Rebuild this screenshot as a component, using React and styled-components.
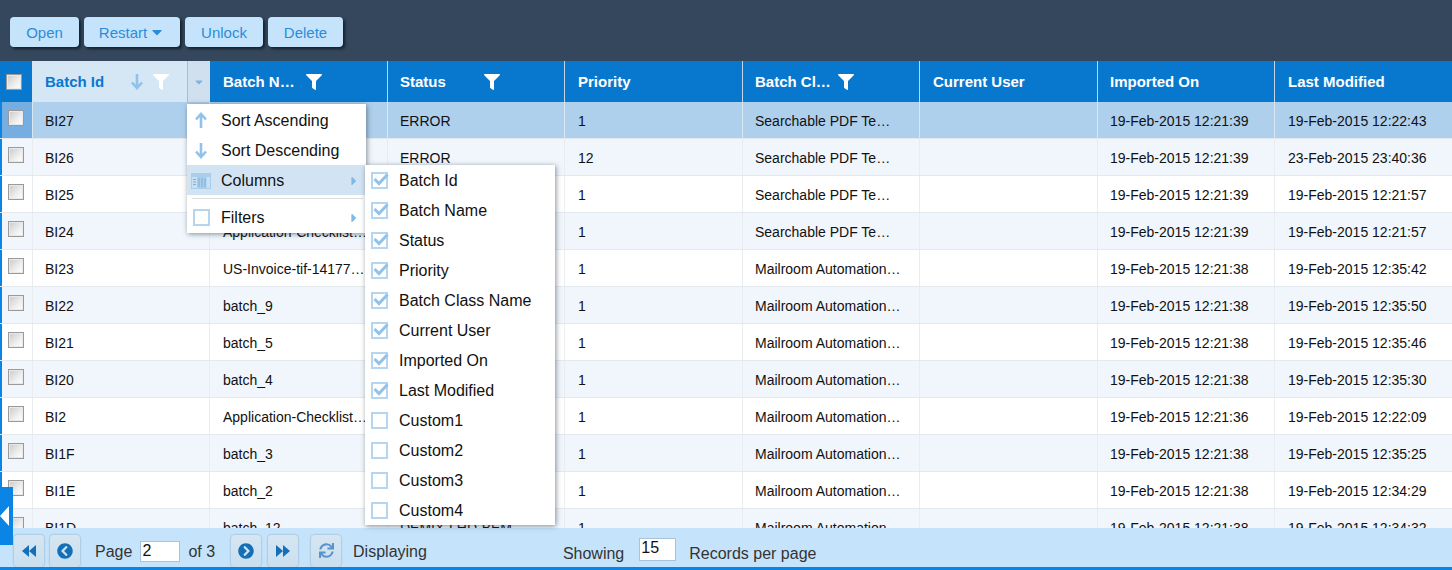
import React from "react";
import styled, { createGlobalStyle } from "styled-components";
import { FaFilter, FaChevronCircleLeft, FaChevronCircleRight, FaSync, FaCaretDown, FaCaretRight } from "react-icons/fa";

const GlobalStyle = createGlobalStyle`
  html, body {
    margin: 0;
    padding: 0;
    overflow: hidden;
  }
  body {
    font-family: "Liberation Sans", Arial, sans-serif;
  }
`;

const COLUMN_TEMPLATE = "32px 177px 178px 177px 178px 177px 178px 177px 178px";

const Page = styled.div`
  position: relative;
  display: flex;
  flex-direction: column;
  width: 1452px;
  height: 570px;
  overflow: hidden;
  background: #fff;
`;

const Toolbar = styled.div`
  display: flex;
  align-items: flex-start;
  gap: 5px;
  flex: 0 0 61px;
  box-sizing: border-box;
  padding: 17px 0 0 10px;
  background: #35475c;
`;

const ToolButton = styled.button`
  display: flex;
  align-items: center;
  justify-content: center;
  gap: 2px;
  width: ${(p) => p.$width}px;
  height: 30px;
  padding: 0;
  border: 0;
  border-radius: 4px;
  background: #c5e4fb;
  color: #2b8cd9;
  font-family: inherit;
  font-size: 15px;
  box-shadow: 2px 2px 3px rgba(10, 20, 30, 0.75);
`;

const HeaderRow = styled.div`
  display: grid;
  grid-template-columns: ${COLUMN_TEMPLATE};
  flex: 0 0 41px;
  background: #0878cf;
`;

const HeaderCell = styled.div`
  display: flex;
  align-items: center;
  box-sizing: border-box;
  padding-left: 13px;
  border-left: 1px solid ${(p) => (p.$active ? "#d5e6f5" : p.$afterActive ? "#d0e0ee" : "#c4d6e6")};
  background: ${(p) => (p.$active ? "#d5e6f5" : "transparent")};
  color: ${(p) => (p.$active ? "#0878cf" : "#fff")};
  font-size: 15px;
  font-weight: bold;
  white-space: nowrap;
  &:nth-child(even) {
    padding-left: 12px;
  }
`;

const HeaderLabel = styled.span`
  flex: none;
  width: ${(p) => p.$width}px;
`;

const HeaderFilter = styled(FaFilter)`
  flex: none;
  margin-left: ${(p) => p.$gap}px;
  width: 16px;
  height: 16px;
  color: #fff;
`;

const HeaderTrigger = styled.div`
  display: flex;
  align-items: center;
  justify-content: center;
  align-self: stretch;
  flex: 0 0 22px;
  margin-left: auto;
  box-sizing: border-box;
  border-left: 1px solid #a9bccb;
  background: #d0e0ee;
  color: #7db5e3;
`;

const SortArrow = styled.span`
  display: flex;
  flex: none;
  color: #8fc3ec;
`;

const CheckCell = styled.div`
  display: flex;
  align-items: ${(p) => (p.$header ? "center" : "flex-start")};
  box-sizing: border-box;
  padding: ${(p) => (p.$header ? "0 0 0 6px" : "8px 0 0 6px")};
  background: ${(p) => (p.$selected ? "#76aee2" : "transparent")};
  border-left: ${(p) => (p.$header ? "0" : "2px solid #0a85e6")};
`;

const GreyCheck = styled.span`
  display: block;
  box-sizing: border-box;
  width: 16px;
  height: 16px;
  border: 1px solid #9a9a9a;
  background: linear-gradient(135deg, #c9c9c9 0%, #efefef 60%, #fff 100%);
  box-shadow: inset 0 0 0 1px #e9e9e9;
`;

const Rows = styled.div`
  flex: 1 1 0;
  min-height: 0;
  overflow: hidden;
`;

const Row = styled.div`
  display: grid;
  grid-template-columns: ${COLUMN_TEMPLATE};
  height: 37px;
  box-sizing: border-box;
  border-bottom: 1px solid #e4e9ed;
  background: ${(p) => (p.$selected ? "#aed0ed" : p.$odd ? "#f0f6fc" : "#fff")};
`;

const Cell = styled.div`
  box-sizing: border-box;
  padding: 2px 0 0 13px;
  border-left: 1px solid ${(p) => (p.$selected ? "#d9e7f3" : "#e9edf0")};
  color: #111;
  font-size: 14px;
  line-height: 35px;
  white-space: nowrap;
  overflow: hidden;
  &:nth-child(even) {
    padding-left: 12px;
  }
`;

const Footer = styled.div`
  display: flex;
  align-items: center;
  flex: 0 0 42px;
  box-sizing: border-box;
  padding: 6px 0 0 14px;
  border-bottom: 3px solid #0a85e6;
  background: #c5e4fb;
  color: #222;
  font-size: 16px;
`;

const PagerButton = styled.button`
  display: flex;
  align-items: center;
  justify-content: center;
  flex: none;
  width: 30px;
  height: 32px;
  margin-left: ${(p) => p.$gap || 0}px;
  padding: 0;
  border: 0;
  border-radius: 4px;
  background: linear-gradient(#d6e6f2, #c9dfef);
  box-shadow: 0 0 2px rgba(70, 90, 110, 0.6);
  color: ${(p) => p.$color || "#136fb8"};
`;

const FooterText = styled.span`
  flex: none;
  margin: ${(p) => p.$drop}px 0 0 ${(p) => p.$gap}px;
  color: #333;
`;

const PagerInput = styled.div`
  flex: none;
  box-sizing: border-box;
  width: ${(p) => p.$width}px;
  height: ${(p) => p.$height}px;
  margin: ${(p) => p.$lift}px 0 0 ${(p) => p.$gap}px;
  padding-left: 1px;
  border: 1px solid #a9c4d8;
  background: #fff;
  color: #111;
  font-size: 16px;
  line-height: 17px;
`;

const SideTab = styled.div`
  position: absolute;
  left: 0;
  top: 487px;
  display: flex;
  align-items: center;
  width: 13px;
  height: 58px;
  background: #0a85e6;
`;

const Menu = styled.div`
  position: absolute;
  left: ${(p) => p.$left}px;
  top: ${(p) => p.$top}px;
  box-sizing: border-box;
  width: ${(p) => p.$width}px;
  padding: ${(p) => p.$pad || 0}px 0 ${(p) => p.$pad || 0}px;
  background: #fff;
  box-shadow: 1px 1px 5px rgba(40, 50, 60, 0.55);
  z-index: ${(p) => p.$layer};
`;

const MenuItem = styled.div`
  display: flex;
  align-items: center;
  box-sizing: border-box;
  height: 30px;
  padding-top: 1px;
  background: ${(p) => (p.$active ? "#d2e4f4" : "transparent")};
  color: #111;
  font-size: 16px;
`;

const MenuIcon = styled.span`
  display: flex;
  align-items: center;
  justify-content: center;
  flex: none;
  box-sizing: border-box;
  width: 34px;
  padding-right: ${(p) => p.$inset || 0}px;
  color: #8fc3ec;
`;

const MenuArrow = styled(FaCaretRight)`
  margin-left: auto;
  margin-right: 7px;
  width: 10px;
  height: 14px;
  color: #7fb9e8;
`;

const MenuSeparator = styled.div`
  height: 1px;
  margin: 3px 3px 3px 5px;
  background: #dcdcdc;
`;

const BoxIcon = styled.span`
  position: relative;
  display: block;
  box-sizing: border-box;
  width: 17px;
  height: 17px;
  border: 2px solid #b5d5f0;
  background: #fff;
`;

const TickSvg = styled.svg`
  position: absolute;
  left: -2px;
  top: -2px;
`;

const ArrowSvg = styled.svg`
  transform: ${(p) => (p.$up ? "rotate(180deg)" : "none")};
`;

const TriangleSvg = styled.svg`
  transform: ${(p) => (p.$right ? "scaleX(-1)" : "none")};
`;

function Arrow({ up }) {
  return (
    <ArrowSvg $up={up} width="14" height="17" viewBox="0 0 14 17">
      <path d="M7 1v13M2 9.5l5 5.5 5-5.5" fill="none" stroke="currentColor" strokeWidth="2.6" />
    </ArrowSvg>
  );
}

function ColumnsIcon() {
  return (
    <svg width="20" height="16" viewBox="0 0 20 16">
      <rect width="20" height="16" fill="#a9cdea" />
      <rect x="1" y="4" width="5" height="11" fill="#c9e0f3" />
      <path d="M2 6.5h3M2 9h3M2 11.5h3M8 5v9M11 5v9M14 5v9" stroke="#7fb0d8" strokeWidth="1" />
      <rect x="15.5" y="4" width="3.5" height="11" fill="#c9e0f3" />
    </svg>
  );
}

function DoubleTriangle({ right }) {
  return (
    <TriangleSvg $right={right} width="16" height="14" viewBox="0 0 16 14">
      <path d="M8 1v12L1 7zM15 1v12L8 7z" fill="currentColor" />
    </TriangleSvg>
  );
}

function Tick() {
  return (
    <TickSvg width="18" height="17" viewBox="0 0 18 17">
      <path d="M3.5 7l4.5 4.5L16.500 2.500" fill="none" stroke="#8fc3ec" strokeWidth="3" />
    </TickSvg>
  );
}

const APP = "Application-Checklist…";
const SEARCH = "Searchable PDF Te…";
const MAIL = "Mailroom Automation…";

const batches = [
  ["BI27", APP, "ERROR", "1", SEARCH, "19-Feb-2015 12:21:39", "19-Feb-2015 12:22:43"],
  ["BI26", APP, "ERROR", "12", SEARCH, "19-Feb-2015 12:21:39", "23-Feb-2015 23:40:36"],
  ["BI25", APP, "ERROR", "1", SEARCH, "19-Feb-2015 12:21:39", "19-Feb-2015 12:21:57"],
  ["BI24", APP, "ERROR", "1", SEARCH, "19-Feb-2015 12:21:39", "19-Feb-2015 12:21:57"],
  ["BI23", "US-Invoice-tif-14177…", "ERROR", "1", MAIL, "19-Feb-2015 12:21:38", "19-Feb-2015 12:35:42"],
  ["BI22", "batch_9", "ERROR", "1", MAIL, "19-Feb-2015 12:21:38", "19-Feb-2015 12:35:50"],
  ["BI21", "batch_5", "ERROR", "1", MAIL, "19-Feb-2015 12:21:38", "19-Feb-2015 12:35:46"],
  ["BI20", "batch_4", "ERROR", "1", MAIL, "19-Feb-2015 12:21:38", "19-Feb-2015 12:35:30"],
  ["BI2", APP, "ERROR", "1", MAIL, "19-Feb-2015 12:21:36", "19-Feb-2015 12:22:09"],
  ["BI1F", "batch_3", "ERROR", "1", MAIL, "19-Feb-2015 12:21:38", "19-Feb-2015 12:35:25"],
  ["BI1E", "batch_2", "ERROR", "1", MAIL, "19-Feb-2015 12:21:38", "19-Feb-2015 12:34:29"],
  ["BI1D", "batch_12", "DEMIX-LHD-BEM…", "1", MAIL, "19-Feb-2015 12:21:38", "19-Feb-2015 12:34:32"],
];

const columnChoices = [
  ["Batch Id", true],
  ["Batch Name", true],
  ["Status", true],
  ["Priority", true],
  ["Batch Class Name", true],
  ["Current User", true],
  ["Imported On", true],
  ["Last Modified", true],
  ["Custom1", false],
  ["Custom2", false],
  ["Custom3", false],
  ["Custom4", false],
];

export default function App() {
  return (
    <Page>
      <GlobalStyle />
      <Toolbar>
        <ToolButton $width={69}>Open</ToolButton>
        <ToolButton $width={96}>
          Restart
          <FaCaretDown size={16} />
        </ToolButton>
        <ToolButton $width={78}>Unlock</ToolButton>
        <ToolButton $width={75}>Delete</ToolButton>
      </Toolbar>

      <HeaderRow>
        <CheckCell $header>
          <GreyCheck />
        </CheckCell>
        <HeaderCell $active>
          <HeaderLabel $width={85}>Batch Id</HeaderLabel>
          <SortArrow>
            <Arrow />
          </SortArrow>
          <HeaderFilter $gap={9} />
          <HeaderTrigger>
            <FaCaretDown size={12} />
          </HeaderTrigger>
        </HeaderCell>
        <HeaderCell $afterActive>
          <HeaderLabel $width={76}>Batch N…</HeaderLabel>
          <HeaderFilter $gap={7} />
        </HeaderCell>
        <HeaderCell>
          <HeaderLabel $width={84}>Status</HeaderLabel>
          <HeaderFilter $gap={0} />
        </HeaderCell>
        <HeaderCell>Priority</HeaderCell>
        <HeaderCell>
          <HeaderLabel $width={76}>Batch Cl…</HeaderLabel>
          <HeaderFilter $gap={7} />
        </HeaderCell>
        <HeaderCell>Current User</HeaderCell>
        <HeaderCell>Imported On</HeaderCell>
        <HeaderCell>Last Modified</HeaderCell>
      </HeaderRow>

      <Rows>
        {batches.map((b, i) => (
          <Row key={b[0]} $selected={i === 0} $odd={i % 2 === 1}>
            <CheckCell $selected={i === 0}>
              <GreyCheck />
            </CheckCell>
            <Cell $selected={i === 0}>{b[0]}</Cell>
            <Cell $selected={i === 0}>{b[1]}</Cell>
            <Cell $selected={i === 0}>{b[2]}</Cell>
            <Cell $selected={i === 0}>{b[3]}</Cell>
            <Cell $selected={i === 0}>{b[4]}</Cell>
            <Cell $selected={i === 0}></Cell>
            <Cell $selected={i === 0}>{b[5]}</Cell>
            <Cell $selected={i === 0}>{b[6]}</Cell>
          </Row>
        ))}
      </Rows>

      <Footer>
        <PagerButton>
          <DoubleTriangle />
        </PagerButton>
        <PagerButton $gap={6}>
          <FaChevronCircleLeft size={16} />
        </PagerButton>
        <FooterText $gap={15} $drop={3}>Page</FooterText>
        <PagerInput $width={40} $height={21} $lift={2} $gap={8}>
          2
        </PagerInput>
        <FooterText $gap={8} $drop={3}>of 3</FooterText>
        <PagerButton $gap={16}>
          <FaChevronCircleRight size={16} />
        </PagerButton>
        <PagerButton $gap={7}>
          <DoubleTriangle right />
        </PagerButton>
        <PagerButton $gap={13} $color="#5a93cc">
          <FaSync size={15} />
        </PagerButton>
        <FooterText $gap={12} $drop={3}>Displaying</FooterText>
        <FooterText $gap={136} $drop={6}>Showing</FooterText>
        <PagerInput $width={37} $height={23} $lift={-2} $gap={15}>
          15
        </PagerInput>
        <FooterText $gap={13} $drop={6}>Records per page</FooterText>
      </Footer>

      <SideTab>
        <svg width="9" height="20" viewBox="0 0 9 20">
          <path d="M0 10L9 0v20z" fill="#fff" />
        </svg>
      </SideTab>

      <Menu $left={187} $top={104} $width={179} $pad={1} $layer={2}>
        <MenuItem>
          <MenuIcon $inset={6}>
            <Arrow up />
          </MenuIcon>
          Sort Ascending
        </MenuItem>
        <MenuItem>
          <MenuIcon $inset={6}>
            <Arrow />
          </MenuIcon>
          Sort Descending
        </MenuItem>
        <MenuItem $active>
          <MenuIcon $inset={6}>
            <ColumnsIcon />
          </MenuIcon>
          Columns
          <MenuArrow />
        </MenuItem>
        <MenuSeparator />
        <MenuItem>
          <MenuIcon $inset={6}>
            <BoxIcon />
          </MenuIcon>
          Filters
          <MenuArrow />
        </MenuItem>
      </Menu>

      <Menu $left={365} $top={165} $width={190} $layer={3}>
        {columnChoices.map(([label, checked]) => (
          <MenuItem key={label}>
            <MenuIcon $inset={6}>
              <BoxIcon>{checked && <Tick />}</BoxIcon>
            </MenuIcon>
            {label}
          </MenuItem>
        ))}
      </Menu>
    </Page>
  );
}
